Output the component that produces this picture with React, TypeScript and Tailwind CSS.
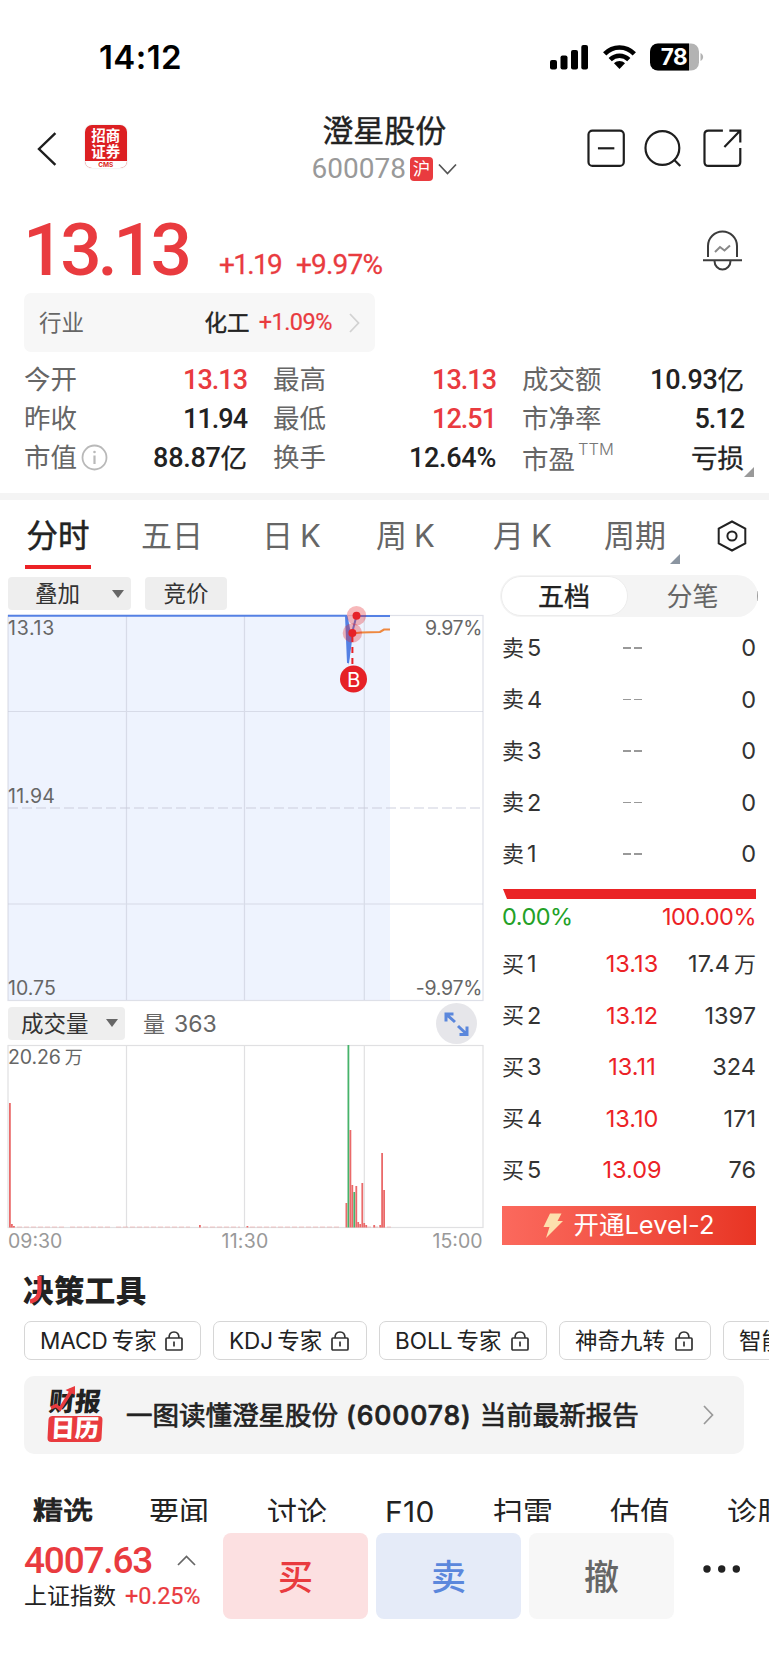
import React from "react";

const UI = "font-['Inter','Noto_Sans_CJK_SC',sans-serif]";
const NUM = "font-['Roboto','Noto_Sans_CJK_SC',sans-serif]";

function StatusBar() {
  return (
    <div className="flex h-[100px] items-start justify-between pl-[99px] pr-[65px]">
      <span className="mt-[37px] text-[33px] leading-[40px] font-semibold tracking-[0.400px] text-black">14:12</span>
      <div className="mt-[43px] flex">
        <svg width="38" height="28" viewBox="0 0 38 28" fill="#000">
          <rect x="0" y="17" width="7" height="9.5" rx="2" />
          <rect x="10.5" y="12.5" width="7" height="14" rx="2" />
          <rect x="21" y="7" width="7" height="19.500" rx="2" />
          <rect x="31.300" y="2" width="6.700" height="24.500" rx="2" />
        </svg>
        <svg className="ml-[15px]" width="33" height="28" viewBox="0 0 33 28" fill="none" stroke="#000" strokeWidth="4.600">
          <path d="M1.700 10.800C10 2.300 23 2.300 31.300 10.800" />
          <path d="M7.200 16.600C12.600 11.400 20.400 11.400 25.800 16.600" />
          <path d="M16.500 26L11 20.200C14.200 17.300 18.800 17.300 22 20.200Z" fill="#000" stroke="none" />
        </svg>
        <svg className="ml-[14px]" width="54" height="28" viewBox="0 0 54 28">
          <clipPath id="battery"><rect x="0" y="0.500" width="49" height="27" rx="8" /></clipPath>
          <g clipPath="url(#battery)">
            <rect x="0" y="0" width="49" height="28" fill="#b3b3b3" />
            <rect x="0" y="0" width="39" height="28" fill="#000" />
          </g>
          <path d="M50.500 10C54 11.500 54 16.500 50.500 18Z" fill="#b3b3b3" />
          <text x="24" y="22" textAnchor="middle" fontFamily="Inter" fontWeight="700" fontSize="22.500" letterSpacing="-0.500" fill="#fff">78</text>
        </svg>
      </div>
    </div>
  );
}

function Header() {
  return (
    <div className="flex h-[104px] pl-[37px] pr-[26px]">
      <svg className="mt-[31px]" width="20" height="36" viewBox="0 0 20 36" fill="none" stroke="#1e1e1e" strokeWidth="2.400">
        <path d="M18.500 2L2 18L18.500 34" />
      </svg>
      <div className="ml-[28px] mt-[25px] flex h-[43px] w-[42px] flex-col items-center overflow-hidden rounded-[7px] bg-[#dc1f22] text-white shadow-[0_0_2px_rgba(0,0,0,0.15)]">
        <span className="mt-[3px] text-[14.500px] leading-[16px] font-bold">招商</span>
        <span className="text-[14.500px] leading-[16px] font-bold">证券</span>
        <span className="mt-[1px] flex h-[8px] w-full items-center justify-center bg-white text-[6.500px] leading-[8px] font-bold text-[#dc1f22]">CMS</span>
      </div>
      <div className="ml-[185px] flex w-[145px] flex-col items-center">
        <h1 className="mt-[9px] text-[31px] leading-[44px] text-[#222] [-webkit-text-stroke:0.400px_#222]">澄星股份</h1>
        <div className="flex items-center">
          <span className={`${NUM} text-[28px] leading-[32px] text-[#999]`}>600078</span>
          <span className="ml-[4px] flex h-[24px] w-[23px] items-center justify-center rounded-[4px] bg-[#e93b3f] text-[17.500px] leading-none text-white">沪</span>
          <svg className="ml-[5px]" width="19" height="12" viewBox="0 0 19 12" fill="none" stroke="#555" strokeWidth="1.700"><path d="M1 1.500L9.500 10.500L18 1.500" /></svg>
        </div>
      </div>
      <svg className="ml-[130px] mt-[29px]" width="39" height="39" viewBox="0 0 39 39" fill="none" stroke="#1e1e1e" strokeWidth="2.200">
        <rect x="1.500" y="1.500" width="35.500" height="35.500" rx="4" /><path d="M11 19.300H27.500" />
      </svg>
      <svg className="ml-[19px] mt-[29px]" width="39" height="39" viewBox="0 0 39 39" fill="none" stroke="#1e1e1e" strokeWidth="2.200">
        <circle cx="18.500" cy="19" r="17" /><path d="M30 30.500L36.500 37" />
      </svg>
      <svg className="ml-[20px] mt-[29px]" width="40" height="39" viewBox="0 0 40 39" fill="none" stroke="#1e1e1e" strokeWidth="2.200">
        <path d="M20 1.500H5.500Q1.500 1.500 1.500 5.500V33Q1.500 37 5.500 37H33.500Q37.500 37 37.500 33V19" />
        <path d="M26.500 1.500H37.500V13.500M37 2L21.500 18" />
      </svg>
    </div>
  );
}

function Price() {
  return (
    <div className="flex h-[89px] pl-[23px] pr-[26px] text-[#e93b3f]">
      <span className={`${NUM} mt-[4px] w-[196px] text-[73px] leading-[84px] font-medium tracking-[-4.300px]`}>13.13</span>
      <span className={`${NUM} mt-[44px] w-[77px] text-[28px] leading-[34px] tracking-[-1.700px] [-webkit-text-stroke:0.300px_#e93b3f]`}>+1.19</span>
      <span className={`${NUM} mt-[44px] text-[28px] leading-[34px] tracking-[-0.800px] [-webkit-text-stroke:0.300px_#e93b3f]`}>+9.97%</span>
      <svg className="ml-auto mt-[26px]" width="41" height="42" viewBox="0 0 41 42" fill="none" stroke="#3c3c3c" strokeWidth="2">
        <path d="M6 27V16A14.500 14.500 0 0 1 35 16V27" />
        <path d="M1 30.300H40M12.500 31A8 8.500 0 0 0 28.500 31" />
        <path d="M13 22L18 17L22.500 20.500L28 15.500" stroke="#888" />
      </svg>
    </div>
  );
}

function Industry() {
  return (
    <div className="ml-[24px] flex h-[59px] w-[351px] items-center rounded-[7px] bg-[#f7f7f7] pl-[15px] pr-[15px] pt-[1px]">
      <span className="text-[22.500px] text-[#666]">行业</span>
      <span className="ml-auto text-[22.500px] text-[#222] [-webkit-text-stroke:0.400px_#222]">化工</span>
      <span className={`${NUM} ml-[9px] text-[23.500px] tracking-[-0.500px] text-[#e93b3f] [-webkit-text-stroke:0.200px_#e93b3f]`}>+1.09%</span>
      <svg className="ml-[17px]" width="11" height="20" viewBox="0 0 11 20" fill="none" stroke="#d2d2d2" strokeWidth="1.800"><path d="M1 1L9.500 10L1 19" /></svg>
    </div>
  );
}

function Stat({ label, value, red, extra, tight }: { label: React.ReactNode; value: string; red?: boolean; extra?: React.ReactNode; tight?: boolean }) {
  const m = value.match(/^([^亿亏]*)(.*)$/)!;
  return (
    <div className="flex h-[39px] items-center">
      <span className="text-[26.500px] leading-[39px] text-[#666]">{label}</span>
      {extra}
      <span className={`${NUM} relative top-[1px] ml-auto flex text-[27px] leading-[39px] ${red ? "text-[#e93b3f]" : "text-[#222]"}`}>
        <span className={`font-medium ${tight ? "tracking-[-1px]" : "tracking-[-0.300px]"}`}>{m[1]}</span>
        {m[2] && <span className="text-[26.500px] [-webkit-text-stroke:0.300px_#222]">{m[2]}</span>}
      </span>
    </div>
  );
}

function Stats() {
  return (
    <div className="relative h-[141px] pt-[8px] pl-[24px]">
      <div className="grid grid-cols-[223px_223px_222px] gap-x-[26px]">
        <Stat label="今开" value="13.13" red tight />
        <Stat label="最高" value="13.13" red tight />
        <Stat label="成交额" value="10.93亿" />
        <Stat label="昨收" value="11.94" tight />
        <Stat label="最低" value="12.51" red tight />
        <Stat label="市净率" value="5.12" tight />
        <Stat
          label="市值" value="88.87亿"
          extra={
            <svg className="ml-[4px]" width="27" height="27" viewBox="0 0 27 27" fill="none" stroke="#b9b9b9" strokeWidth="1.800">
              <circle cx="13.500" cy="13.500" r="12" /><path d="M13.500 11.500V20" strokeWidth="2.200" /><circle cx="13.500" cy="8" r="1.300" fill="#b9b9b9" stroke="none" />
            </svg>
          }
        />
        <Stat label="换手" value="12.64%" />
        <Stat
          label={<span className="relative top-[2px]">市盈</span>} value="亏损"
          extra={<span className="mb-[17px] ml-[3px] text-[16.500px] leading-[18px] font-light text-[#777]">TTM</span>}
        />
      </div>
      <svg className="absolute left-[744px] top-[115px]" width="10" height="10"><path d="M10 0V10H0Z" fill="#999" /></svg>
    </div>
  );
}

function PeriodTabs() {
  const t = "flex items-center gap-[7px] text-[31px] leading-[40px] text-[#666] whitespace-nowrap";
  return (
    <div className="relative flex h-[77px] items-start pt-[16px] pl-[25px]">
      <div className="w-[116px]">
        <div className="flex w-[66px] flex-col items-center">
          <span className="text-[31.500px] leading-[40px] text-[#222] [-webkit-text-stroke:0.500px_#222]">分时</span>
          <span className="mt-[9px] h-[4px] w-[66px] bg-[#ec2226]" />
        </div>
      </div>
      <span className={`${t} w-[121px]`}>五日</span>
      <span className={`${t} w-[114px]`}><span>日</span><span>K</span></span>
      <span className={`${t} w-[117px]`}><span>周</span><span>K</span></span>
      <span className={`${t} w-[111px]`}><span>月</span><span>K</span></span>
      <span className={`${t} w-[113px]`}>周期</span>
      <svg className="mt-[4px]" width="30" height="32" viewBox="0 0 30 32" fill="none" stroke="#222" strokeWidth="2">
        <path d="M15 1.500L28.300 8.700V23.300L15 30.500L1.700 23.300V8.700Z" /><circle cx="15" cy="16" r="4.600" />
      </svg>
      <svg className="absolute left-[670px] top-[54px]" width="10" height="10"><path d="M10 0V10H0Z" fill="#8b95a1" /></svg>
    </div>
  );
}

function Caret() {
  return <svg width="12" height="8"><path d="M0 0H12L6 8Z" fill="#666" /></svg>;
}

function PriceChart() {
  return (
    <svg className="block text-[#666]" width="490" height="396" viewBox="0 606 490 396" fontFamily="Inter" fontSize="19.500" fill="currentColor">
      <rect x="8" y="615" width="382" height="385" fill="#eef3fe" />
      <g stroke="#c8ccd8" strokeOpacity="0.600" strokeWidth="1.200" fill="none">
        <rect x="8" y="615.500" width="475" height="385" />
        <path d="M8 711.500H483M8 904H483M126.500 615V1000M244.500 615V1000M364.300 615V1000" />
        <path d="M8 808H483" strokeDasharray="10 4" strokeWidth="1.600" />
      </g>
      <path d="M8 615.700H346L348 663L352 633L356.500 616H390" fill="none" stroke="#5480e4" strokeWidth="2" />
      <path d="M346 616H347.500L351.500 636L348.500 665Z" fill="#5480e4" />
      <path d="M352 633.500L361 632.500L380 632L384 629.500H390" fill="none" stroke="#ee8840" strokeWidth="2.200" />
      <path d="M352.400 636V665" stroke="#e62127" strokeWidth="2" strokeDasharray="6 5" />
      <circle cx="356.500" cy="615.700" r="9.700" fill="#e62127" fillOpacity="0.320" />
      <circle cx="352.400" cy="633" r="9.700" fill="#e62127" fillOpacity="0.320" />
      <circle cx="356.500" cy="615.700" r="4" fill="#e62127" />
      <circle cx="352.400" cy="633" r="4" fill="#e62127" />
      <circle cx="353.500" cy="679" r="13.500" fill="#e62127" />
      <text x="353.700" y="687" textAnchor="middle" fontSize="20.500" fill="#fff">B</text>
      <text x="8" y="634.500" letterSpacing="0.700">13.13</text>
      <text x="482" y="634.500" textAnchor="end" letterSpacing="-0.400">9.97%</text>
      <text x="8" y="803" letterSpacing="0.200">11.94</text>
      <text x="8" y="994.500">10.75</text>
      <text x="482" y="994.500" textAnchor="end" letterSpacing="-0.300">-9.97%</text>
    </svg>
  );
}

const bars: [number, number, string][] = [
  [9, 1103, "r"], [11, 1224, "r"], [13, 1226, "r"], [199, 1225, "r"], [246.500, 1226, "r"],
  [345.500, 1203, "r"], [347.500, 1045, "g"], [349.500, 1130, "r"], [351.400, 1185, "r"], [353.400, 1192, "g"],
  [355.400, 1186, "r"], [357.300, 1222, "r"], [359.300, 1224, "r"], [361.400, 1183, "r"], [363.300, 1223, "r"],
  [365.300, 1225, "r"], [373.300, 1225, "r"], [379.300, 1225, "r"], [381.200, 1153, "r"], [383.200, 1190, "r"],
];

function VolumeChart() {
  return (
    <svg className="block text-[#666]" width="490" height="216" viewBox="0 1042 490 216" fontFamily="Inter, 'Noto Sans CJK SC'" fontSize="19.500" fill="currentColor">
      <g stroke="#e0e0e2" strokeWidth="1.200" fill="none">
        <rect x="8" y="1045.500" width="475" height="182" />
        <path d="M126.500 1045V1227M244.500 1045V1227M364.300 1045V1227" />
      </g>
      <path d="M10 1227H66M70 1227H110M116 1227H190M203 1227H240M250 1227H340M366 1227H391" stroke="#ee7c7c" strokeOpacity="0.500" strokeWidth="0.800" strokeDasharray="5 2" />
      {bars.map(([x, y, c]) => (
        <rect key={x} x={x} y={y} width="1.800" height={1227.500 - y} fill={c === "g" ? "#46b36b" : "#ea6a6a"} />
      ))}
      <text x="8" y="1064" letterSpacing="-0.100">20.26<tspan dx="4" fontSize="18">万</tspan></text>
      <g fill="#999">
        <text x="8" y="1248">09:30</text>
        <text x="245" y="1248" textAnchor="middle" letterSpacing="0.200">11:30</text>
        <text x="482.500" y="1248" textAnchor="end">15:00</text>
      </g>
    </svg>
  );
}

function ChartColumn() {
  return (
    <div className="w-[490px]">
      <div className="flex h-[29px] pl-[8px]">
        <div className="flex h-[33px] w-[123px] shrink-0 items-center rounded-[4px] bg-[#eee] pl-[27px] pr-[7px]">
          <span className="mr-auto pt-[2px] text-[22.500px] leading-none text-[#333]">叠加</span><Caret />
        </div>
        <div className="ml-[14px] flex h-[33px] w-[82px] items-center justify-center rounded-[4px] bg-[#eee] pt-[2px] text-[22.500px] leading-none text-[#333]">竞价</div>
      </div>
      <PriceChart />
      <div className="flex h-[40px] items-center pl-[8px] pt-[2px]">
        <div className="flex h-[33px] w-[117px] items-center rounded-[4px] bg-[#eee] pl-[13px] pr-[7px]">
          <span className="mr-auto pt-[2px] text-[22.500px] leading-none text-[#333]">成交量</span><Caret />
        </div>
        <span className="ml-[18px] pt-[2px] text-[22px] leading-none text-[#666]">量</span>
        <span className="ml-[9px] pt-[2px] text-[23px] leading-none text-[#666]">363</span>
        <svg className="ml-auto mr-[13px] h-[41px] w-[41px] shrink-0" viewBox="0 0 41 41">
          <circle cx="20.500" cy="20.500" r="20.500" fill="#e6e6ea" />
          <g fill="none" stroke="#5b87dc" strokeWidth="3"><path d="M10 18.500V11H17.500M10.500 11.500L19 19M31 23.500V31.500H23.500M30.500 31L22 23" /></g>
        </svg>
      </div>
      <VolumeChart />
    </div>
  );
}

function BookRow({ side, level, price, qty }: { side: string; level: number; price?: string; qty: React.ReactNode }) {
  return (
    <div className="relative flex h-[51.500px] items-center justify-between text-[23.500px] leading-none text-[#333]">
      <span className="flex items-center"><span className="text-[22px]">{side}</span><span className="ml-[3px]">{level}</span></span>
      <span className="absolute left-0 flex w-[260px] justify-center">
        {price ? <span className="text-[#ec2226]">{price}</span> : <span className="flex gap-[3px]"><i className="h-[1.500px] w-[8px] bg-[#999]" /><i className="h-[1.500px] w-[8px] bg-[#999]" /></span>}
      </span>
      <span>{qty}</span>
    </div>
  );
}

function OrderBook() {
  return (
    <div className="w-[279px] pl-[10px]">
      <div className="relative mt-[-2px] flex h-[42px] w-[258px] items-center overflow-hidden rounded-full bg-[#f4f4f4] p-[1px]">
        <span className="flex h-[40px] w-[127px] items-center justify-center rounded-full border border-[#ececec] bg-white pr-[1px] pt-[1px] text-[26px] leading-none text-[#222] [-webkit-text-stroke:0.400px_#222]">五档</span>
        <span className="flex flex-1 items-center justify-center pt-[1px] text-[26px] leading-none text-[#666]">分笔</span>
        <span className="absolute right-0 top-[16px] h-[10px] w-[1px] bg-[#999]" />
      </div>
      <div className="mt-[5px] ml-[2px] w-[254px]">
        {[5, 4, 3, 2, 1].map((n) => <BookRow key={n} side="卖" level={n} qty="0" />)}
        <div className="mt-[9.500px] ml-[1px] h-[10px] bg-[#ea2325] [clip-path:polygon(0_0,100%_0,100%_100%,4px_100%)]" />
        <div className="mt-[5px] flex h-[26px] items-center justify-between text-[23.500px] leading-none tracking-[-0.500px]">
          <span className="text-[#23a127]">0.00%</span><span className="text-[#ec2226]">100.00%</span>
        </div>
        <div className="mt-[8px]">
          <BookRow side="买" level={1} price="13.13" qty={<span className="flex items-center">17.4<span className="ml-[4px] text-[22px]">万</span></span>} />
          <BookRow side="买" level={2} price="13.12" qty="1397" />
          <BookRow side="买" level={3} price="13.11" qty="324" />
          <BookRow side="买" level={4} price="13.10" qty="171" />
          <BookRow side="买" level={5} price="13.09" qty="76" />
        </div>
      </div>
      <div className="mt-[10px] ml-[2px] flex h-[39px] w-[254px] items-center justify-center bg-linear-to-r from-[#fb695d] to-[#e83423] text-[25.500px] leading-none text-white">
        <svg className="mr-[10px]" width="20" height="25" viewBox="0 0 20 25"><path d="M7 0.500H18.500L14.500 8H20L3 25L6.500 14H0.500Z" fill="#fde0ad" /></svg>
        <span>开通Level-2</span>
      </div>
    </div>
  );
}

function Lock() {
  return (
    <svg width="18" height="20" viewBox="0 0 18 20" fill="none" stroke="#333" strokeWidth="1.700">
      <rect x="1" y="7" width="16" height="12" rx="1" /><path d="M4 7Q4 1 9 1Q14 1 14 7M9 10.500V15.500" />
    </svg>
  );
}

function Chip({ children, width }: { children: React.ReactNode; width: string }) {
  return (
    <div className={`flex h-[39px] shrink-0 items-center justify-between rounded-[7px] border border-[#d6d6d6] pl-[15px] pr-[17px] text-[22.500px] leading-none whitespace-nowrap text-[#222] ${width}`}>
      <span className="flex items-center pt-[2px]">{children}</span><Lock />
    </div>
  );
}

function Tools() {
  return (
    <div>
      <h2 className="relative h-[63px] pl-[23px] pt-[13px] text-[30.500px] leading-[40px] font-black tracking-[0.400px] text-[#222]">
        决策工具
        <svg className="absolute left-[29px] top-[18px]" width="14" height="28" viewBox="0 0 14 28" fill="none" stroke="#e93b3f" strokeWidth="4.200"><path d="M10.500 0V13Q10.500 24 1 25.500" /></svg>
      </h2>
      <div className="flex gap-[12px] overflow-hidden pl-[24px]">
        <Chip width="w-[177px]">MACD<span className="ml-[4px]">专家</span></Chip>
        <Chip width="w-[154px]">KDJ<span className="ml-[4px]">专家</span></Chip>
        <Chip width="w-[168px]">BOLL<span className="ml-[4px]">专家</span></Chip>
        <Chip width="w-[152px]">神奇九转</Chip>
        <Chip width="w-[152px]">智能盯盘</Chip>
      </div>
      <div className="mt-[16px] ml-[24px] flex h-[78px] w-[720px] items-center rounded-[10px] bg-[#f4f4f4] pl-[23px] pr-[30px]">
        <div className="relative flex w-[56px] flex-col items-center">
          <span className="-skew-x-6 text-[26px] leading-[27px] font-black text-[#222]">财报</span>
          <svg className="absolute left-[3px] top-[-2px]" width="28" height="26" viewBox="0 0 28 26" fill="none" stroke="#e93b3f" strokeWidth="3.400"><path d="M1 22L6 19.500L10 23L22 4" /><path d="M15.500 4L25 0L25 9Z" fill="#e93b3f" stroke="none" /></svg>
          <span className="mt-[1px] flex h-[26px] w-[54px] -skew-x-3 items-center justify-center rounded-[4px] bg-[#e93b3f] text-[24px] leading-none font-black text-white">日历</span>
        </div>
        <span className="ml-[23px] flex items-center pt-[1px] text-[26.500px] leading-none whitespace-nowrap text-[#222] [-webkit-text-stroke:0.700px_#222]">
          一图读懂澄星股份<span className="mx-[8px] font-medium tracking-[0.900px]">(600078)</span>当前最新报告
        </span>
        <svg className="ml-auto" width="11" height="20" viewBox="0 0 11 20" fill="none" stroke="#999" strokeWidth="1.700"><path d="M1 1L9.500 10L1 19" /></svg>
      </div>
    </div>
  );
}

function NewsTabs() {
  return (
    <div className="mt-[32px] h-[36px] overflow-hidden pl-[33px]">
      <div className="flex pt-[4px] text-[30px] leading-[44px] whitespace-nowrap text-[#222]">
        <span className="w-[116px] shrink-0 [-webkit-text-stroke:1.100px_#222]">精选</span>
        <span className="w-[118px] shrink-0">要闻</span>
        <span className="w-[118px] shrink-0">讨论</span>
        <span className="w-[108px] shrink-0 tracking-[0.300px]">F10</span>
        <span className="w-[117px] shrink-0">扫雷</span>
        <span className="w-[117px] shrink-0">估值</span>
        <span className="shrink-0">诊股</span>
      </div>
    </div>
  );
}

function BottomBar() {
  const b = "flex h-[86px] w-[145px] items-center justify-center rounded-[8px] pt-[2px] text-[35px] leading-none font-medium";
  return (
    <div className="relative z-10 flex bg-white pt-[11px] pl-[24px]">
      <div className="w-[199px]">
        <div className="flex items-center pt-[6px]">
          <span className={`${NUM} w-[153px] text-[37px] leading-[43px] font-medium tracking-[-1.200px] text-[#e93b3f]`}>4007.63</span>
          <svg width="19" height="11" viewBox="0 0 19 11" fill="none" stroke="#666" strokeWidth="1.700"><path d="M1 10L9.500 1.500L18 10" /></svg>
        </div>
        <div className="mt-[-1px] flex items-center">
          <span className="text-[23px] leading-[30px] text-[#222]">上证指数</span>
          <span className={`${NUM} ml-[9px] text-[23.500px] leading-[30px] tracking-[-0.200px] text-[#e93b3f] [-webkit-text-stroke:0.200px_#e93b3f]`}>+0.25%</span>
        </div>
      </div>
      <div className="flex gap-[8px]">
        <div className={`${b} bg-[#fce0e1] text-[#e93b3f]`}>买</div>
        <div className={`${b} bg-[#e5ebf8] text-[#5b87dc]`}>卖</div>
        <div className={`${b} bg-[#f7f7f7] text-[#666]`}>撤</div>
      </div>
      <svg className="mt-[32px] ml-[29px]" width="38" height="8" fill="#222"><circle cx="4" cy="4" r="3.700" /><circle cx="18.700" cy="4" r="3.700" /><circle cx="33.300" cy="4" r="3.700" /></svg>
    </div>
  );
}

export default function App() {
  return (
    <main className={`${UI} h-[1665px] w-[769px] overflow-hidden bg-white`}>
      <StatusBar />
      <Header />
      <Price />
      <Industry />
      <Stats />
      <div className="h-[7px] bg-[#f4f4f4]" />
      <PeriodTabs />
      <div className="flex h-[681px]">
        <ChartColumn />
        <OrderBook />
      </div>
      <Tools />
      <NewsTabs />
      <BottomBar />
    </main>
  );
}
